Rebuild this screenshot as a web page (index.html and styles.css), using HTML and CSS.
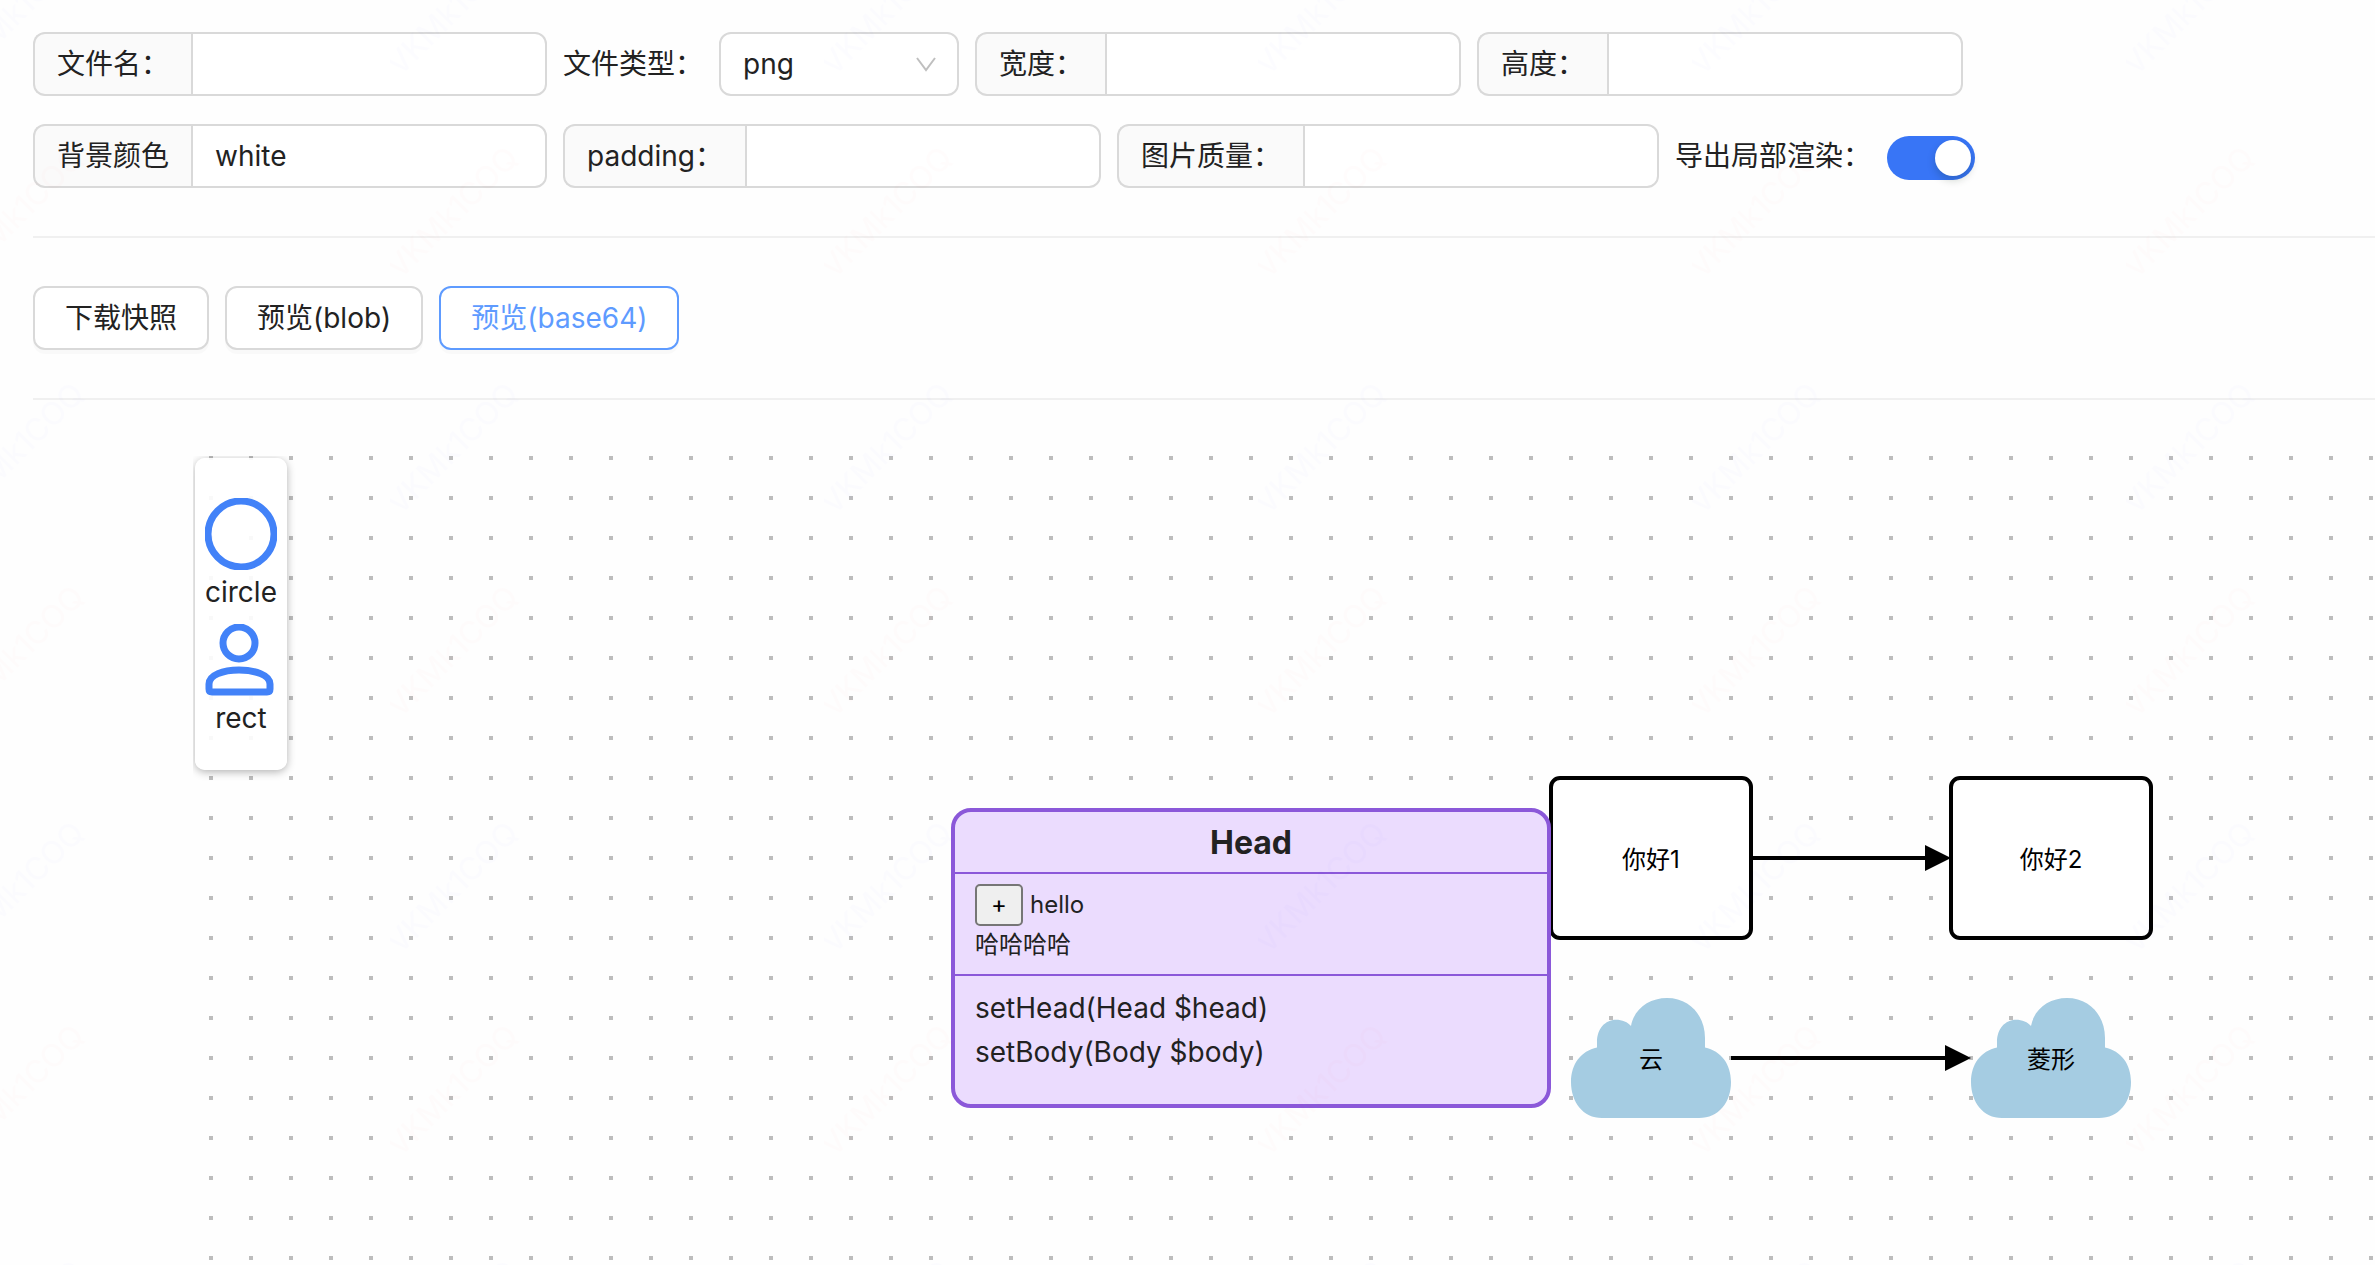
FILE: index.html
```html
<!DOCTYPE html>
<html lang="zh-CN">
<head>
<meta charset="utf-8">
<title>导出快照</title>
<link rel="stylesheet" href="styles.css">
</head>
<body>
<main class="page">
  <form class="options">
    <div class="row">
      <div class="group"><label class="addon" for="name">文件名：</label><input class="field" id="name" type="text"></div>
      <label class="text" for="type">文件类型：</label>
      <div class="picker">
        <select class="select" id="type"><option>png</option><option>jpeg</option><option>webp</option><option>svg</option></select>
        <svg class="chevron" viewBox="0 0 22 16" aria-hidden="true"><path d="M2 2 L11 14 L20 2"/></svg>
      </div>
      <div class="group"><label class="addon" for="w">宽度：</label><input class="field" id="w" type="text"></div>
      <div class="group"><label class="addon" for="h">高度：</label><input class="field" id="h" type="text"></div>
    </div>
    <div class="row">
      <div class="group"><label class="addon" for="bg">背景颜色</label><input class="field" id="bg" type="text" value="white"></div>
      <div class="group"><label class="addon" for="pad">padding：</label><input class="field" id="pad" type="text"></div>
      <div class="group"><label class="addon" for="q">图片质量：</label><input class="field" id="q" type="text"></div>
      <label class="text" for="partial">导出局部渲染：</label>
      <input class="switch" id="partial" type="checkbox" role="switch" checked>
    </div>
  </form>
  <hr class="divider">
  <div class="row">
    <button class="btn" type="button">下载快照</button>
    <button class="btn" type="button">预览(blob)</button>
    <button class="btn btn-active" type="button">预览(base64)</button>
  </div>
  <hr class="divider">

  <section class="stage">
    <svg class="graph" aria-label="graph">
      <defs>
        <pattern id="dots" x="16" y="0" width="40" height="40" patternUnits="userSpaceOnUse">
          <rect width="4" height="4" fill="#bdbdbd"/>
        </pattern>
        <path id="cloud" d="M31 120C12 120 0 104 0 84C0 66 10 53 26 49.500V44C26 31 34 21.700 45 21.700C51 21.700 57 24 60 28C63 11 78 0 96 0C119 0 134 18 134 40V49.500C150 53 160 66 160 84C160 104 148 120 128 120Z"/>
      </defs>
      <rect width="100%" height="100%" fill="url(#dots)"/>
      <g class="shape">
        <rect x="1358" y="322" width="200" height="160" rx="9"/>
        <rect x="1758" y="322" width="200" height="160" rx="9"/>
      </g>
      <g class="cloud">
        <use href="#cloud" x="1378" y="542"/>
        <use href="#cloud" x="1778" y="542"/>
      </g>
      <g class="edge">
        <path d="M1558 402H1736"/><path class="arrow" d="M1732 389L1758 402L1732 415Z"/>
        <path d="M1538 602H1756"/><path class="arrow" d="M1752 589L1778 602L1752 615Z"/>
      </g>
      <g class="caption">
        <text x="1458" y="412">你好1</text>
        <text x="1858" y="412">你好2</text>
        <text x="1458" y="612">云</text>
        <text x="1858" y="612">菱形</text>
      </g>
    </svg>

    <article class="uml">
      <h2 class="uml-head">Head</h2>
      <div class="uml-props">
        <div class="uml-prop"><button class="plus" type="button">+</button><span>hello</span></div>
        <div>哈哈哈哈</div>
      </div>
      <div class="uml-methods">
        <div>setHead(Head $head)</div>
        <div>setBody(Body $body)</div>
      </div>
    </article>

    <aside class="palette">
      <div class="tool">
        <svg class="icon" viewBox="0 0 72 72" aria-hidden="true"><circle cx="36" cy="36" r="33"/></svg>
        <span>circle</span>
      </div>
      <div class="tool">
        <svg class="icon" viewBox="0 0 72 72" aria-hidden="true"><circle cx="34" cy="19" r="16"/><path d="M4 60C4 51 18 46 34 46S65 51 65 60V65Q65 68 62 68H7Q4 68 4 65Z"/></svg>
        <span>rect</span>
      </div>
    </aside>
  </section>
</main>
<svg class="watermark" aria-hidden="true">
  <defs>
    <pattern id="mark" x="390" y="80" width="434" height="439" patternUnits="userSpaceOnUse">
      <text class="mark-blue" transform="translate(10 436) rotate(-45)">VKMk1COQ</text>
      <text class="mark-red" transform="translate(10 200) rotate(-45)">VKMk1COQ</text>
    </pattern>
  </defs>
  <rect width="100%" height="100%" fill="url(#mark)"/>
  <text class="mark-gray" x="243" y="1131">VKMk1COQ</text>
  <text class="mark-gray" x="2143" y="119">VKMk1COQ</text>
</svg>
</body>
</html>
```
FILE: styles.css
```css
* { box-sizing: border-box; }

body {
  margin: 0;
  background: #fefefe;
  color: #222;
  font-family: Inter, "Noto Sans CJK SC", sans-serif;
  font-size: 28px;
  line-height: 44px;
}

input, select, button { font: inherit; color: inherit; }

.page {
  display: flex;
  flex-direction: column;
  min-height: 100vh;
  padding: 32px 0 0 33px;
}

.options {
  display: flex;
  flex-direction: column;
  gap: 28px;
}

.row {
  display: flex;
  align-items: center;
  gap: 16px;
}

.text { white-space: nowrap; }

.group { display: flex; height: 64px; }

.addon {
  padding: 8px 22px;
  border: 2px solid #d9d9d9;
  border-right: 0;
  border-radius: 12px 0 0 12px;
  background: #fafafa;
  white-space: nowrap;
}

.field {
  width: 356px;
  padding: 0 22px;
  border: 2px solid #d9d9d9;
  border-radius: 0 12px 12px 0;
  background: #fff;
}

.picker { position: relative; }

.select {
  display: block;
  width: 240px;
  height: 64px;
  padding: 0 22px;
  border: 2px solid #d9d9d9;
  border-radius: 12px;
  background: #fff;
  appearance: none;
}

.chevron {
  position: absolute;
  top: 24px;
  right: 22px;
  width: 22px;
  height: 16px;
  fill: none;
  stroke: #bfbfbf;
  stroke-width: 2;
  pointer-events: none;
}

.switch {
  width: 88px;
  height: 44px;
  margin: 4px 0 0;
  padding: 4px;
  border-radius: 22px;
  background: #ccc;
  appearance: none;
}

.switch::before {
  content: "";
  display: block;
  width: 36px;
  height: 36px;
  border-radius: 50%;
  background: #fff;
  box-shadow: 0 4px 8px rgba(0, 35, 11, 0.2);
}

.switch:checked { background: #3875f6; }
.switch:checked::before { margin-left: auto; }

.divider {
  width: 100%;
  height: 2px;
  margin: 48px 0;
  border: 0;
  background: #f0f0f0;
}

.btn {
  height: 64px;
  padding: 0 30px;
  border: 2px solid #d9d9d9;
  border-radius: 12px;
  background: #fff;
  box-shadow: 0 4px 0 rgba(0, 0, 0, 0.02);
  white-space: nowrap;
}

.btn-active {
  border-color: #5e9bff;
  color: #5e9bff;
}

.stage {
  position: relative;
  flex: 1;
  min-height: 700px;
  margin: 8px 0 0 160px;
  overflow: hidden;
}

.graph {
  position: absolute;
  inset: 0;
  width: 100%;
  height: 100%;
}

.shape { fill: #fff; stroke: #000; stroke-width: 4; }
.cloud { fill: #a5cce2; }
.edge { fill: none; stroke: #000; stroke-width: 4; }
.arrow { fill: #000; stroke: none; }
.caption { fill: #000; font-size: 24px; text-anchor: middle; }

.uml {
  position: absolute;
  top: 352px;
  left: 758px;
  width: 600px;
  height: 300px;
  border: 4px solid #8b58d9;
  border-radius: 20px;
  background: #ebdcfe;
}

.uml-head {
  margin: 0;
  padding: 9px 0 7px;
  font-size: 32px;
  line-height: 44px;
  text-align: center;
}

.uml-props {
  padding: 9px 20px 11px;
  border: solid #8b58d9;
  border-width: 2px 0;
  font-size: 24px;
  line-height: 36px;
}

.uml-prop {
  display: flex;
  align-items: center;
  gap: 7px;
  height: 44px;
}

.plus {
  width: 48px;
  height: 42px;
  padding: 0;
  border: 2px solid #767676;
  border-radius: 5px;
  background: #efefef;
  color: #000;
  line-height: 36px;
}

.uml-methods { padding: 10px 20px; }

.palette {
  position: absolute;
  top: 2px;
  left: 2px;
  display: flex;
  flex-direction: column;
  gap: 10px;
  width: 92px;
  padding: 40px 10px 30px;
  border-radius: 10px;
  background: rgba(255, 255, 255, 0.9);
  box-shadow: 0 2px 8px rgba(0, 0, 0, 0.3);
}

.tool {
  display: flex;
  flex-direction: column;
  align-items: center;
}

.icon {
  width: 72px;
  height: 72px;
  fill: none;
  stroke: #4282f8;
  stroke-width: 7;
}

.watermark {
  position: absolute;
  inset: 0;
  width: 100%;
  height: 100%;
  font-size: 31px;
  pointer-events: none;
}

.mark-blue { fill: rgba(0, 0, 255, 0.01); }
.mark-red { fill: rgba(255, 0, 0, 0.01); }
.mark-gray { fill: rgba(0, 0, 0, 0.008); }
```
